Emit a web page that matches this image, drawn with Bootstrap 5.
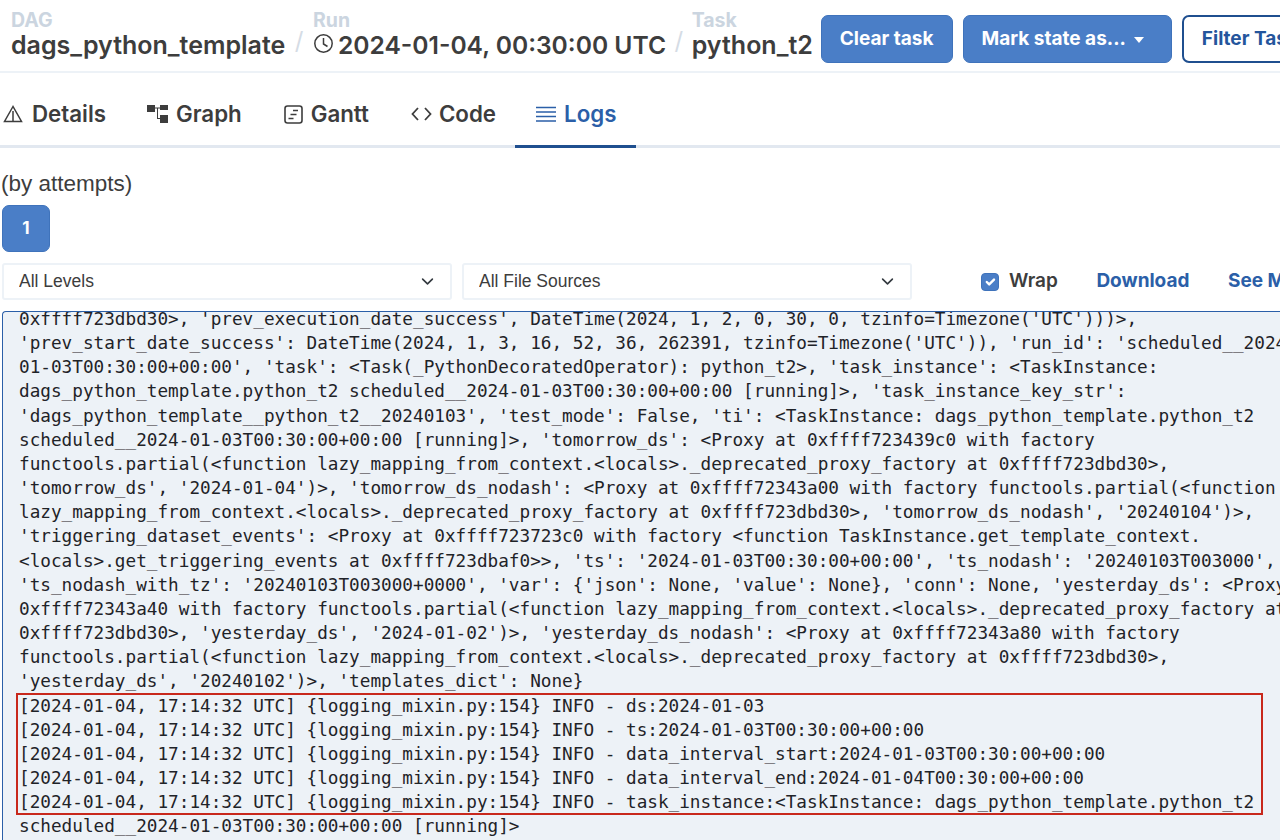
<!DOCTYPE html>
<html lang="en"><head><meta charset="utf-8"><title>Logs</title>
<link rel="stylesheet" href="https://cdn.jsdelivr.net/npm/bootstrap@5.3.0/dist/css/bootstrap.min.css">
<style>
html,body{height:840px;overflow:hidden}
body{font-family:"Inter","Liberation Sans",sans-serif;color:#3d3d3d;background:#fff;width:1280px}
.shell{width:1280px;height:840px;overflow:hidden}
.shell>*{flex:none}
.crumbbar{height:73px;border-bottom:2px solid #edf2f7;padding:11px 0 0 11px;overflow:hidden}
.crumbbar>*{flex:none}
.crumb-label{font-size:19.500px;line-height:19px;font-weight:700;color:#cbd5e0}
.crumb-val{font-size:25px;line-height:30px;font-weight:600;color:#3d3d3d;white-space:nowrap}
.run-val{font-size:24.600px}
.clock-gap{margin-right:4px}
.crumb-sep{font-size:24px;color:#d5dce5;margin:0 9.500px;line-height:29px}
.crumb-sep.tight-sep{margin:0 8.500px}
.action-row{margin-top:4px;margin-left:8px;height:48px;gap:10px}
.air-btn{flex:none;height:48px;font-size:19px;font-weight:700;border-radius:7px;padding:0 18px;white-space:nowrap;display:flex;align-items:center}
.air-fill{background:#4a7ec7;border:1px solid #3f73bb;color:#fff}
.air-line{background:#fff;border:2px solid #1f4f8f;color:#24559c}
.mark-btn{padding-right:27px}
.caret-mini{width:0;height:0;border-left:5.500px solid transparent;border-right:5.500px solid transparent;border-top:6px solid #fff;margin-left:8px;margin-top:2px}
.tabrow{border-bottom:3px solid #e2e8f0;height:75px}
.tabitem{height:75px;margin-bottom:-3px;padding:10px 21px 0;display:flex;align-items:center;gap:8px;font-size:22.300px;font-weight:600;color:#3d3d3d;border-bottom:3px solid transparent;text-decoration:none}
.tabitem.first-tab{padding-left:3px;padding-right:20px;gap:9px}
.tabitem.code-tab{gap:7px;padding-right:19px}
.tabitem.active-tab{color:#2b5fa8;border-bottom-color:#1f4f8f;padding-right:20px}
.tabicon{flex:none}
.attempt-note{font-family:"Liberation Sans",sans-serif;font-size:22.500px;line-height:26px;padding:23px 0 0 1px}
.attempt-btn{width:48px;height:47px;margin:8px 0 0 2px;background:#4a7ec7;border:1px solid #3f73bb;border-radius:7px;color:#fff;font-weight:700;font-size:17px;padding:0}
.filters{margin:11px 0 0 2px;height:37px;overflow:hidden}
.filters>*{flex:none}
.lvl-select{width:450px;height:37px;border:2px solid #edf2f7;border-radius:3px;font-family:"Liberation Sans",sans-serif;font-size:17.500px;color:#3d3d3d;padding:0 15px;line-height:33px;box-shadow:none;background-size:17px 13px;background-position:right 14px center}
.second-select{margin-left:10px}
.wrap-group{margin-left:69px}
.wrap-box{width:18px;height:18px;margin:0;background-color:#4a7ec7;border-color:#3f73bb;border-radius:3px}
.wrap-box:checked{background-color:#4a7ec7;border-color:#3f73bb}
.wrap-label{font-size:19px;font-weight:600;color:#3d3d3d;margin-left:10px}
.log-link{font-size:19px;font-weight:700;color:#2b5fa8;text-decoration:none;white-space:nowrap;margin-left:38.500px}
.logbox{margin:11px 0 0 2px;height:529px;background:#edf2f7;border:1px solid #2b5fa8;border-width:1px 0 0 1px;border-radius:4px 0 0 0;padding:0 0 0 16px;overflow:hidden}
.logtext{margin:-5px 0 0;font-family:"DejaVu Sans Mono",monospace;font-size:17.700px;line-height:24.160px;color:#1f2328;white-space:pre;overflow:visible}
.log-hit{display:block;width:1245px;margin-left:-2px;padding-left:2px;outline:2px solid #c8281c;outline-offset:-1px}
</style></head><body>
<div class="shell d-flex flex-column">
  <header class="crumbbar d-flex">
    <div><div class="crumb-label">DAG</div><div class="crumb-val">dags_python_template</div></div>
    <div class="crumb-sep align-self-end mb-3">/</div>
    <div><div class="crumb-label">Run</div><div class="crumb-val run-val d-flex align-items-center"><svg width="21" height="21" viewBox="0 0 21 21" fill="none" stroke="#3d3d3d" stroke-width="1.500" class="mb-1 clock-gap"><circle cx="10.500" cy="10.500" r="8.700"/><path d="M10.500 5v6l4 2.500"/></svg><span>2024-01-04, 00:30:00 UTC</span></div></div>
    <div class="crumb-sep tight-sep align-self-end mb-3">/</div>
    <div><div class="crumb-label">Task</div><div class="crumb-val">python_t2</div></div>
    <div class="d-flex action-row">
      <button class="btn air-btn air-fill">Clear task</button>
      <button class="btn air-btn air-fill mark-btn">Mark state as...<span class="caret-mini"></span></button>
      <button class="btn air-btn air-line">Filter Tasks</button>
    </div>
  </header>
  <nav class="tabrow d-flex">
    <a class="tabitem first-tab" href="#"><svg class="tabicon" width="20" height="20" viewBox="0 0 20 20" fill="none" stroke="#3d3d3d" stroke-width="1.500"><path d="M10 2.500 1.500 17.500h17zM10 7v10.500"/></svg>Details</a>
    <a class="tabitem" href="#"><svg class="tabicon" width="21" height="20" viewBox="0 0 21 20" fill="#3d3d3d"><rect x="0" y="1" width="8" height="7"/><rect x="13" y="1" width="8" height="5"/><rect x="13" y="11" width="8" height="8"/><path d="M8 3.500h5v1H11V14h2v1h-3V4.500H8z"/></svg>Graph</a>
    <a class="tabitem" href="#"><svg class="tabicon" width="19" height="19" viewBox="0 0 19 19" fill="none" stroke="#3d3d3d" stroke-width="1.600"><rect x="1" y="1" width="17" height="17" rx="2.500"/><path d="M9 5.500h5M6.500 9.500h6M4.500 13.500h5"/></svg>Gantt</a>
    <a class="tabitem code-tab" href="#"><svg class="tabicon" width="21" height="16" viewBox="0 0 21 16" fill="none" stroke="#3d3d3d" stroke-width="1.800"><path d="M7 2 1.500 8 7 14M14 2l5.500 6L14 14"/></svg>Code</a>
    <a class="tabitem active-tab" href="#"><svg class="tabicon" width="20" height="16" viewBox="0 0 20 16" fill="none" stroke="#2b5fa8" stroke-width="1.700"><path d="M0 1.500h20M0 6h20M0 10.500h20M0 15h20"/></svg>Logs</a>
  </nav>
  <div class="attempt-note">(by attempts)</div>
  <button class="btn attempt-btn">1</button>
  <div class="filters d-flex align-items-center">
    <select class="form-select lvl-select"><option>All Levels</option></select>
    <select class="form-select lvl-select second-select"><option>All File Sources</option></select>
    <div class="d-flex align-items-center wrap-group">
      <input class="form-check-input wrap-box" type="checkbox" checked aria-label="Wrap">
      <span class="wrap-label">Wrap</span>
    </div>
    <a class="log-link" href="#">Download</a>
    <a class="log-link" href="#">See More</a>
  </div>
  <div class="logbox"><pre class="logtext">0xffff723dbd30&gt;, 'prev_execution_date_success', DateTime(2024, 1, 2, 0, 30, 0, tzinfo=Timezone('UTC')))&gt;,
'prev_start_date_success': DateTime(2024, 1, 3, 16, 52, 36, 262391, tzinfo=Timezone('UTC')), 'run_id': 'scheduled__2024-
01-03T00:30:00+00:00', 'task': &lt;Task(_PythonDecoratedOperator): python_t2&gt;, 'task_instance': &lt;TaskInstance:
dags_python_template.python_t2 scheduled__2024-01-03T00:30:00+00:00 [running]&gt;, 'task_instance_key_str':
'dags_python_template__python_t2__20240103', 'test_mode': False, 'ti': &lt;TaskInstance: dags_python_template.python_t2
scheduled__2024-01-03T00:30:00+00:00 [running]&gt;, 'tomorrow_ds': &lt;Proxy at 0xffff723439c0 with factory
functools.partial(&lt;function lazy_mapping_from_context.&lt;locals&gt;._deprecated_proxy_factory at 0xffff723dbd30&gt;,
'tomorrow_ds', '2024-01-04')&gt;, 'tomorrow_ds_nodash': &lt;Proxy at 0xffff72343a00 with factory functools.partial(&lt;function
lazy_mapping_from_context.&lt;locals&gt;._deprecated_proxy_factory at 0xffff723dbd30&gt;, 'tomorrow_ds_nodash', '20240104')&gt;,
'triggering_dataset_events': &lt;Proxy at 0xffff723723c0 with factory &lt;function TaskInstance.get_template_context.
&lt;locals&gt;.get_triggering_events at 0xffff723dbaf0&gt;&gt;, 'ts': '2024-01-03T00:30:00+00:00', 'ts_nodash': '20240103T003000',
'ts_nodash_with_tz': '20240103T003000+0000', 'var': {'json': None, 'value': None}, 'conn': None, 'yesterday_ds': &lt;Proxy
0xffff72343a40 with factory functools.partial(&lt;function lazy_mapping_from_context.&lt;locals&gt;._deprecated_proxy_factory at
0xffff723dbd30&gt;, 'yesterday_ds', '2024-01-02')&gt;, 'yesterday_ds_nodash': &lt;Proxy at 0xffff72343a80 with factory
functools.partial(&lt;function lazy_mapping_from_context.&lt;locals&gt;._deprecated_proxy_factory at 0xffff723dbd30&gt;,
'yesterday_ds', '20240102')&gt;, 'templates_dict': None}
<span class="log-hit">[2024-01-04, 17:14:32 UTC] {logging_mixin.py:154} INFO - ds:2024-01-03
[2024-01-04, 17:14:32 UTC] {logging_mixin.py:154} INFO - ts:2024-01-03T00:30:00+00:00
[2024-01-04, 17:14:32 UTC] {logging_mixin.py:154} INFO - data_interval_start:2024-01-03T00:30:00+00:00
[2024-01-04, 17:14:32 UTC] {logging_mixin.py:154} INFO - data_interval_end:2024-01-04T00:30:00+00:00
[2024-01-04, 17:14:32 UTC] {logging_mixin.py:154} INFO - task_instance:&lt;TaskInstance: dags_python_template.python_t2</span>scheduled__2024-01-03T00:30:00+00:00 [running]&gt;</pre></div>
</div>
<script src="https://cdn.jsdelivr.net/npm/bootstrap@5.3.0/dist/js/bootstrap.bundle.min.js"></script>
</body></html>
